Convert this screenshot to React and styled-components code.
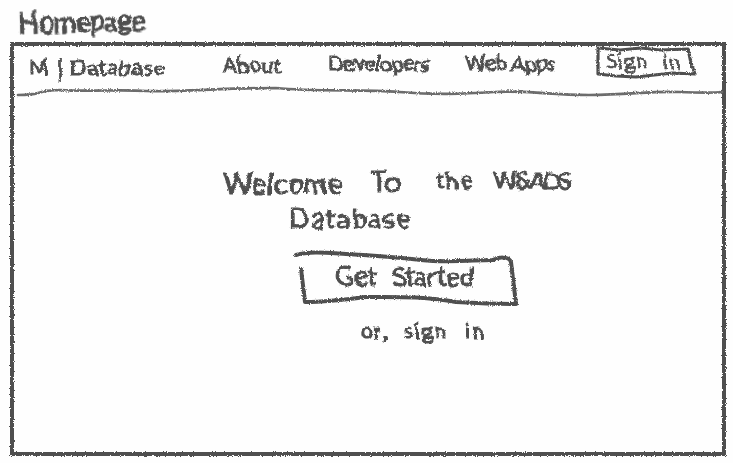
import React from "react";
import styled, { createGlobalStyle } from "styled-components";

const INK = "#505050";

const GlobalStyle = createGlobalStyle`
  * { box-sizing: border-box; }
  html, body { margin: 0; padding: 0; background: #fefefe; overflow: hidden; }
`;

const Page = styled.div`
  width: 733px;
  height: 463px;
  padding: 0 7px 7px 11px;
  display: flex;
  flex-direction: column;
  overflow: hidden;
  background: #fefefe;
  color: ${INK};
  font-family: Lato, "Open Sans", sans-serif;
`;

const Filters = styled.svg`
  position: absolute;
  width: 0;
  height: 0;
`;

const Word = styled.span`
  display: block;
  flex: none;
  width: ${(p) => p.$width}px;
  height: ${(p) => p.$size}px;
  line-height: ${(p) => p.$size}px;
  margin: ${(p) => p.$drop || 0}px 0 0;
  font-size: ${(p) => p.$size}px;
  font-weight: 400;
  letter-spacing: ${(p) => p.$track || 0}px;
  word-spacing: ${(p) => p.$space || 0}px;
  white-space: nowrap;
  -webkit-text-stroke: ${(p) => p.$weight || 1.1}px ${INK};
  transform: rotate(${(p) => p.$tilt || 0}deg);
  filter: url(#hand);
`;

const Title = styled.header`
  height: 42px;
  flex: none;
  padding: 7px 0 0 7px;
`;

const Frame = styled.main`
  height: 414px;
  flex: none;
  position: relative;
  display: flex;
  flex-direction: column;
  padding: 3px;
  &::before {
    content: "";
    position: absolute;
    inset: 0 0 0 -1px;
    border: 4px solid ${INK};
    filter: url(#grain);
    pointer-events: none;
  }
`;

const Nav = styled.nav`
  height: 53px;
  flex: none;
  position: relative;
  display: flex;
  align-items: flex-start;
  padding-left: 15px;
`;

const Links = styled.div`
  display: flex;
  margin-left: 57px;
`;

const Link = styled.a`
  display: block;
  color: inherit;
  margin-right: ${(p) => p.$gap}px;
`;

const Stroke = styled.svg`
  position: absolute;
  left: ${(p) => p.$left || 0}px;
  top: ${(p) => p.$top || 0}px;
  overflow: visible;
  fill: none;
  stroke: ${(p) => p.$tone || INK};
  stroke-linecap: round;
  stroke-linejoin: round;
  filter: url(#grain);
  pointer-events: none;
`;

const Button = styled.button`
  position: relative;
  display: flex;
  flex: none;
  width: ${(p) => p.$width}px;
  height: ${(p) => p.$height}px;
  margin-left: ${(p) => p.$indent || 0}px;
  padding: ${(p) => p.$pad};
  border: 0;
  background: none;
  color: inherit;
  font: inherit;
  text-align: left;
`;

const Hero = styled.section`
  display: flex;
  flex-direction: column;
  padding: 69px 0 0 209px;
`;

const Line = styled.div`
  display: flex;
  height: ${(p) => p.$height}px;
  margin-left: ${(p) => p.$indent || 0}px;
`;

export default function App() {
  return (
    <Page>
      <GlobalStyle />
      <Filters aria-hidden="true">
        <filter id="hand" x="-10%" y="-30%" width="120%" height="160%">
          <feTurbulence type="fractalNoise" baseFrequency="0.08" numOctaves="1" seed="8" result="wave" />
          <feDisplacementMap in="SourceGraphic" in2="wave" scale="8" xChannelSelector="R" yChannelSelector="G" result="bent" />
          <feTurbulence type="fractalNoise" baseFrequency="0.9" numOctaves="2" seed="3" result="noise" />
          <feDisplacementMap in="bent" in2="noise" scale="2.5" xChannelSelector="R" yChannelSelector="G" />
        </filter>
        <filter id="grain" filterUnits="userSpaceOnUse" x="-10" y="-10" width="750" height="450">
          <feTurbulence type="fractalNoise" baseFrequency="0.9" numOctaves="2" seed="5" result="noise" />
          <feDisplacementMap in="SourceGraphic" in2="noise" scale="3" xChannelSelector="R" yChannelSelector="G" />
        </filter>
      </Filters>

      <Title>
        <Word as="h1" $width={128} $size={28} $tilt={-1.5} $track={-0.8} $weight={1.3}>Homepage</Word>
      </Title>

      <Frame>
        <Nav>
          <Word $width={137} $size={22} $drop={11} $track={0.8}>M | Database</Word>
          <Links>
            <Link $gap={46}><Word $width={59} $size={21} $drop={9} $track={0.2}>About</Word></Link>
            <Link $gap={35}><Word $width={102} $size={21} $drop={7} $track={-0.3}>Developers</Word></Link>
            <Link $gap={42}><Word $width={90} $size={21} $drop={7} $track={-0.6}>Web Apps</Word></Link>
          </Links>
          <Button $width={99} $height={32} $pad="5px 0 0 9px">
            <Stroke $top={3} width="99" height="30" strokeWidth="3.2">
              <path d="M1 0L23 2L44 0L63 2L91 1L94 15L98 26L76 25L39 29L19 28L1 26L1 1" />
            </Stroke>
            <Word $width={76} $size={21} $track={0.8} $space={8} $weight={0.6}>Sign in</Word>
          </Button>
          <Stroke $top={1} $tone="#6c6c6c" width="710" height="53" strokeWidth="2.7">
            <path d="M4 49C12 49 18 49 24 47S34 44 46 44C78 46 104 43 132 45C168 46 207 42 262 42C303 46 347 43 385 46S448 48 480 46S535 49 575 49S635 45 665 46S699 47 708 46" />
          </Stroke>
        </Nav>

        <Hero>
          <Line $height={36}>
            <Word $width={148} $size={29} $drop={1}>Welcome</Word>
            <Word $width={65} $size={28}>To</Word>
            <Word $width={57} $size={24} $drop={1} $track={1}>the</Word>
            <Word $width={79} $size={24} $drop={1} $track={-3}>W&amp;ADS</Word>
          </Line>
          <Line $height={51} $indent={66}>
            <Word $width={122} $size={27} $drop={1} $track={1.5}>Database</Word>
          </Line>
          <Button $width={220} $height={66} $indent={72} $pad="9px 0 0 40px">
            <Stroke width="220" height="50" strokeWidth="4">
              <path d="M1 1C15 -3 33 -1 51 0S100 3 126 6S179 6 198 6C203 3 214 2 216 8L221 50C197 50 179 49 161 48C131 42 98 43 70 43C48 46 30 48 10 48L6 15" />
            </Stroke>
            <Word $width={138} $size={26} $space={8}>Get Started</Word>
          </Button>
          <Line $height={30} $indent={138}>
            <Word $width={43} $size={21} $track={1}>or,</Word>
            <Word $width={61} $size={21} $track={1.8}>sign</Word>
            <Word $width={22} $size={21} $track={3}>in</Word>
          </Line>
        </Hero>
      </Frame>
    </Page>
  );
}
